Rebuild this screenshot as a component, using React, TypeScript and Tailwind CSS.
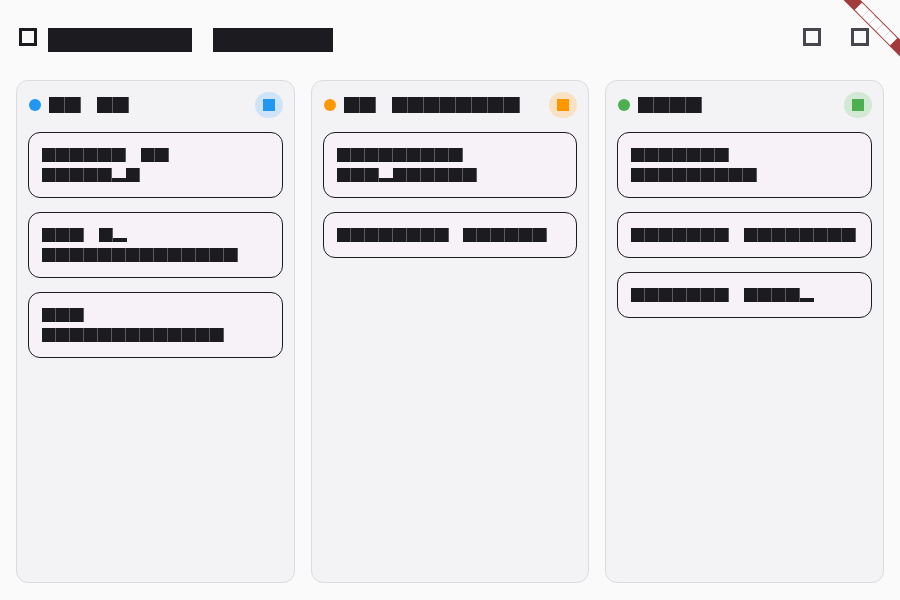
import { Fragment } from "react";

type Task = { id: number; title: string };
type Column = {
  id: string;
  title: string;
  dot: string;
  badge: string;
  ink: string;
  tasks: Task[];
};

const INK = "bg-[#1c1b1f] text-[#1c1b1f]";
const SEAM = "shadow-[inset_-1px_0_0_rgba(255,255,255,0.28)]";

const columns: Column[] = [
  {
    id: "todo",
    title: "To Do",
    dot: "bg-[#2196f3]",
    badge: "bg-[#cfe4f7]",
    ink: "bg-[#2196f3] text-[#2196f3]",
    tasks: [
      { id: 1, title: "Design UI mockups" },
      { id: 2, title: "Set up authentication" },
      { id: 3, title: "Add documentation" },
    ],
  },
  {
    id: "progress",
    title: "In Progress",
    dot: "bg-[#ff9800]",
    badge: "bg-[#f8e2c3]",
    ink: "bg-[#ff9800] text-[#ff9800]",
    tasks: [
      { id: 4, title: "Dashboard components" },
      { id: 5, title: "Database schema" },
    ],
  },
  {
    id: "done",
    title: "Done",
    dot: "bg-[#4caf50]",
    badge: "bg-[#d4e9d5]",
    ink: "bg-[#4caf50] text-[#4caf50]",
    tasks: [
      { id: 6, title: "Testing framework" },
      { id: 7, title: "Collect feedback" },
      { id: 8, title: "Initial setup" },
    ],
  },
];

// the test font draws every glyph as a filled em box, "p" as a descender bar
function Glyph({ c, ink, seam = SEAM }: { c: string; ink: string; seam?: string }) {
  if (c === "p") {
    return (
      <span className="flex h-[1em] w-[1em] items-end">
        <span
          className={`flex h-[1.4286em] w-full items-center justify-center text-[0.2em] leading-none ${ink}`}
        >
          p
        </span>
      </span>
    );
  }
  return (
    <span className={`flex h-[1em] w-[1em] items-center justify-center leading-none ${seam} ${ink}`}>
      {c}
    </span>
  );
}

function Glyphs({
  text,
  ink,
  line,
  seam,
}: {
  text: string;
  ink: string;
  line: string;
  seam?: string;
}) {
  return (
    <>
      {text.split(" ").map((word, i) => (
        <Fragment key={i}>
          {i > 0 && " "}
          <span className={`inline-flex items-center align-top ${line}`}>
            {[...word].map((c, j) => (
              <Glyph key={j} c={c} ink={ink} seam={seam} />
            ))}
          </span>
        </Fragment>
      ))}
    </>
  );
}

function BoxIcon({ className }: { className: string }) {
  return (
    <svg width="18" height="18" viewBox="0 0 18 18" className={className}>
      <rect x="1.5" y="1.5" width="15" height="15" fill="none" stroke="currentColor" strokeWidth="3" />
    </svg>
  );
}

export default function App() {
  return (
    <div className="relative flex h-[600px] w-[900px] flex-col overflow-hidden bg-[#fafafa] font-['Liberation_Mono'] [word-spacing:0.4em]">
      <header className="flex h-[80px] shrink-0 items-start pt-[28px]">
        <BoxIcon className="ml-[19px] text-[#1c1b1f]" />
        <h1 className="ml-[11px] text-[24px] leading-[24px]">
          <Glyphs text="Kanban Board" ink={INK} line="h-[24px]" seam="shadow-none" />
        </h1>
        <div className="ml-auto mr-4 flex">
          <button className="flex w-12 justify-center">
            <BoxIcon className="text-[#49454f]" />
          </button>
          <button className="flex w-12 justify-center">
            <BoxIcon className="text-[#49454f]" />
          </button>
        </div>
      </header>

      <main className="grid min-h-0 flex-1 grid-cols-3 gap-4 px-4 pb-[17px]">
        {columns.map((col) => (
          <section
            key={col.id}
            className="flex flex-col rounded-[12px] border border-[#dddbe0] bg-[#f3f2f5] p-[11px]"
          >
            <div className="mb-[14px] flex h-[26px] items-center">
              <span className={`ml-px h-3 w-3 rounded-full ${col.dot}`} />
              <h2 className="ml-2 text-[16px] leading-[20px]">
                <Glyphs text={col.title} ink={INK} line="h-[20px]" />
              </h2>
              <span
                className={`ml-auto flex h-[26px] w-[28px] items-center justify-center rounded-full text-[12px] ${col.badge}`}
              >
                <Glyph c={String(col.tasks.length)} ink={col.ink} seam="shadow-none" />
              </span>
            </div>
            <div className="flex flex-col gap-[14px]">
              {col.tasks.map((task) => (
                <div
                  key={task.id}
                  className="rounded-[12px] border border-[#1c1b1f] bg-[#f6f2f8] px-[13px] py-3"
                >
                  <p className="text-[14px] leading-[20px]">
                    <Glyphs text={task.title} ink={INK} line="h-[20px]" />
                  </p>
                </div>
              ))}
            </div>
          </section>
        ))}
      </main>

      <div className="pointer-events-none absolute right-0 top-0 h-[90px] w-[90px] overflow-hidden">
        <div className="absolute left-[26px] top-[18px] flex h-[12px] w-[80px] rotate-45 items-center justify-center bg-[#a23b3b] text-[10.2px] leading-[12px]">
          <Glyphs text="DEBUG" ink="bg-white text-white" line="h-[12px]" seam="shadow-none" />
        </div>
      </div>
    </div>
  );
}
